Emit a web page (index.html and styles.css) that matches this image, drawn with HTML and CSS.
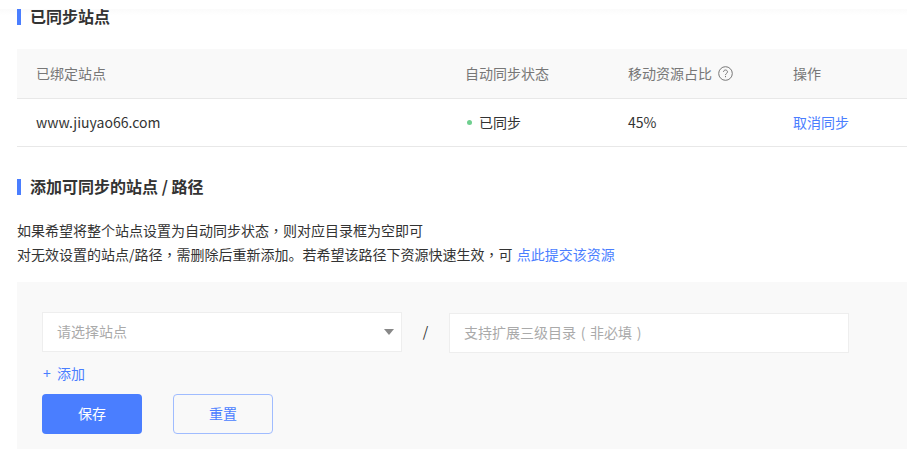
FILE: index.html
```html
<!DOCTYPE html>
<html lang="zh-CN">
<head>
<meta charset="utf-8">
<title>已同步站点</title>
<link rel="stylesheet" href="styles.css">
</head>
<body>
<div class="topband"></div>
<main class="page">
  <h2 class="title title-first">已同步站点</h2>
  <div class="table">
    <div class="row head">
      <div class="c1">已绑定站点</div>
      <div class="c2">自动同步状态</div>
      <div class="c3 help">移动资源占比
        <svg class="q" width="15" height="15" viewBox="0 0 15 15" fill="none" stroke="#777" stroke-width="1"><circle cx="7.5" cy="7.5" r="6.8"/><path d="M5.5 6c0-1.2.9-2 2-2s2 .8 2 1.8c0 1.6-2 1.6-2 3.3"/><path d="M7.5 10v1.2"/></svg>
      </div>
      <div class="c4">操作</div>
    </div>
    <div class="row body">
      <div class="c1 site">www.jiuyao66.com</div>
      <div class="c2 status"><i class="dot"></i>已同步</div>
      <div class="c3">45%</div>
      <div class="c4"><a class="link">取消同步</a></div>
    </div>
  </div>
  <h2 class="title title-second">添加可同步的站点 / 路径</h2>
  <p class="desc">如果希望将整个站点设置为自动同步状态<span class="punct" lang="zh-TW">，</span>则对应目录框为空即可<br>对无效设置的站点/路径<span class="punct" lang="zh-TW">，</span>需删除后重新添加。若希望该路径下资源快速生效<span class="punct" lang="zh-TW">，</span>可 <a class="link submit">点此提交该资源</a></p>
  <section class="panel">
    <div class="fields">
      <div class="select"><span>请选择站点</span><i class="caret"></i></div>
      <span class="slash">/</span>
      <div class="input"><span>支持扩展三级目录<span class="paren">(</span>非必填<span class="paren">)</span></span></div>
    </div>
    <a class="add"><span class="plus">+</span>添加</a>
    <div class="buttons">
      <button class="btn primary">保存</button>
      <button class="btn ghost">重置</button>
    </div>
  </section>
</main>
</body>
</html>
```
FILE: styles.css
```css
* { box-sizing: border-box; }
html, body { margin: 0; height: 449px; overflow: hidden; }
body {
  background: #fff;
  color: #333;
  font-family: "Noto Sans CJK SC", "Noto Sans", sans-serif;
  font-size: 14px;
}
.topband { height: 7px; }
.page { padding-left: 17px; background: linear-gradient(#fbfbfb, #fff 7px); }
.title {
  margin: 0;
  height: 16px;
  border-left: 4px solid #4a7eff;
  padding-left: 9px;
  font-size: 16px;
  line-height: 14px;
  font-weight: 700;
  color: #333;
}
.title-first { margin-top: 2px; }
.title-second { margin-top: 32px; }
.table { margin-top: 24px; }
.row { display: flex; align-items: center; border-bottom: 1px solid #e8e8e8; padding-bottom: 2px; }
.head { height: 50px; background: #f9f9f9; color: #777; }
.body { height: 48px; }
.c1 { width: 448px; padding-left: 19px; }
.c2 { width: 163px; }
.c3 { width: 165px; }
.c4 { flex: 1; }
.help { display: flex; align-items: center; gap: 6px; }
.q { display: block; margin-top: 1px; }
.status { display: flex; align-items: center; }
.dot { width: 5px; height: 5px; border-radius: 50%; background: #6fcf8f; margin: 2px 7px 0 2px; }
.link { color: #4a7eff; }
.submit { margin-left: 1px; }
.punct { font-family: "Noto Sans CJK TC", sans-serif; }
.paren { display: inline-block; width: 14px; text-align: center; }
.desc { margin: 23px 0 0; line-height: 24px; color: #333; }
.panel {
  margin-top: 16px;
  height: 167px;
  background: #f9f9f9;
  padding: 30px 0 0 25px;
}
.fields { display: flex; align-items: flex-start; }
.select, .input {
  height: 40px;
  background: #fff;
  border: 1px solid #eee;
  color: #aaa;
  display: flex;
  align-items: center;
  padding: 0 0 2px 14px;
}
.select { width: 360px; justify-content: space-between; padding-right: 7px; }
.caret { border: 5px solid transparent; border-top: 6px solid #888; border-bottom: 0; margin-top: 2px; }
.slash { width: 47px; text-align: center; line-height: 38px; color: #333; }
.input { width: 400px; margin-top: 1px; }
.add { display: block; margin-top: 10px; padding-left: 1px; line-height: 20px; color: #4a7eff; }
.plus { display: inline-block; width: 14px; }
.buttons { display: flex; gap: 31px; margin-top: 11px; }
.btn {
  width: 100px;
  height: 40px;
  border-radius: 4px;
  font: inherit;
  padding: 0 0 2px;
}
.primary { background: #4a7eff; border: 0; color: #fff; }
.ghost { background: transparent; border: 1px solid #a0bcff; color: #4a7eff; }
```
